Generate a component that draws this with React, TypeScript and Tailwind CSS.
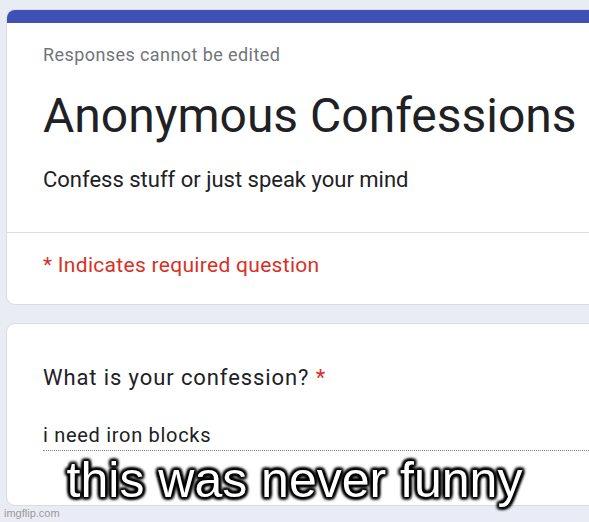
import React from "react";

export default function App() {
  const roboto = { fontFamily: "Roboto, 'Liberation Sans', sans-serif" };
  return (
    <div
      className="relative w-[589px] h-[522px] overflow-hidden bg-[#eaecf5]"
      style={roboto}
    >
      <div className="pt-[9px] pl-[6px]">
        {/* Header card */}
        <div className="w-[700px] rounded-[9px] bg-white border border-[#dadce0] overflow-hidden">
          <div className="h-[14px] bg-[#3f51b5] -mx-px -mt-px" />
          <div className="pl-[36px] pt-[20px] pb-[38px]">
            <div className="text-[18px] leading-[24px] text-[#70757a] tracking-[0.42px]">
              Responses cannot be edited
            </div>
            <div className="mt-[21px] text-[48px] leading-[56px] text-[#202124]">
              Anonymous Confessions
            </div>
            <div className="mt-[22px] text-[22px] leading-[28px] text-[#202124]">
              Confess stuff or just speak your mind
            </div>
          </div>
          <div className="h-px bg-[#dadce0]" />
          <div className="pl-[36px] pt-[18px] pb-[25px]">
            <div className="text-[21px] leading-[28px] text-[#d93025] tracking-[0.3px]">
              * Indicates required question
            </div>
          </div>
        </div>

        {/* Question card */}
        <div className="mt-[18px] w-[700px] h-[183px] rounded-[9px] bg-white border border-[#dadce0] pl-[36px] pt-[40px]">
          <div className="text-[22px] leading-[28px] text-[#202124] tracking-[0.9px]">
            What is your confession? <span className="text-[#d93025]">*</span>
          </div>
          <div className="mt-[30px] w-[546px] border-b border-dotted border-[#8a8a8a]">
            <div className="text-[20px] leading-[26px] text-[#202124] tracking-[0.7px] pb-[2px]">
              i need iron blocks
            </div>
          </div>
        </div>
      </div>

      {/* Meme caption overlay */}
      <div
        className="absolute left-0 right-0 top-[453px] text-center text-white text-[50px] leading-[55px]"
        style={{
          fontFamily: "'Liberation Sans', Arial, sans-serif",
          textShadow:
            "2px 2px 3px #000, -2px -2px 3px #000, 2px -2px 3px #000, -2px 2px 3px #000, 0 0 4px #000, 0 2px 3px #000, 0 -2px 3px #000, 2px 0 3px #000, -2px 0 3px #000",
        }}
      >
        this was never funny
      </div>

      {/* Watermark */}
      <div
        className="absolute left-[4px] top-[507px] text-[11px] leading-[13px] text-[#9a9a9a]"
        style={{ fontFamily: "'Liberation Sans', Arial, sans-serif" }}
      >
        imgflip.com
      </div>
    </div>
  );
}
